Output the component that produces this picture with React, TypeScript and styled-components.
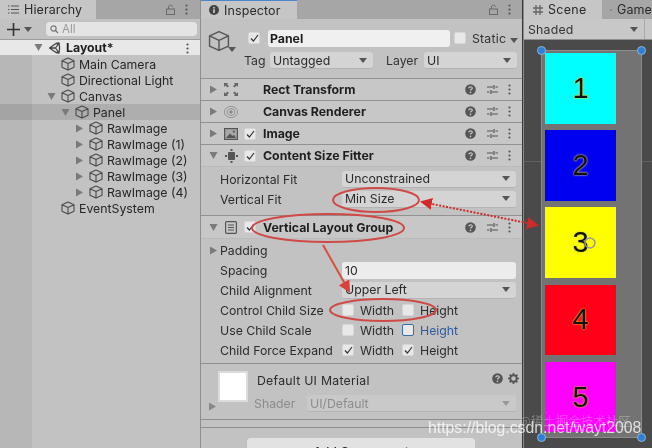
import React from 'react';
import styled, { createGlobalStyle } from 'styled-components';

const Global = createGlobalStyle`
  html, body { margin: 0; padding: 0; background: #c2c2c2; }
  #root { width: 652px; height: 448px; overflow: hidden; }
`;

const Page = styled.div`
  position: relative; width: 652px; height: 448px; overflow: hidden;
  display: flex; background: #282828;
  font-family: Inter, "Noto Sans", sans-serif; font-size: 12.3px; color: #1e1e1e;
  filter: blur(0.45px);
`;
const HierarchyPanel = styled.section`
  width: 200px; flex: none; display: flex; flex-direction: column; background: #c2c2c2; border-right: 1px solid #8e8e8e;
`;
const InspectorPanel = styled.section`
  width: 321px; flex: none; display: flex; flex-direction: column; background: #c2c2c2; border-right: 1px solid #3a3a3a;
`;
const ScenePanel = styled.section`
  flex: 1; min-width: 0; display: flex; flex-direction: column; background: #4a4a4a; border-left: 1px solid #8a8a8a;
`;
const TabBar = styled.div`
  height: 19px; flex: none; display: flex; align-items: stretch; background: #a6a6a6; position: relative;
`;
const Tab = styled.div<{ $w: number; $on?: boolean; $accent?: boolean }>`
  width: ${p => p.$w}px; display: flex; align-items: center; gap: 5px; padding-left: 8px; box-sizing: border-box;
  background: ${p => (p.$on ? '#c6c6c6' : 'transparent')}; font-size: 12.5px; letter-spacing: .1px; color: #2a2a2a;
  white-space: nowrap; overflow: hidden;
  border-top: ${p => (p.$accent ? '1px solid #4a86c8' : 'none')};
`;
const TabTools = styled.div<{ $right: number }>`
  margin-left: auto; display: flex; align-items: center; gap: 10px; padding-right: ${p => p.$right}px;
`;
const HierTools = styled.div`
  height: 20px; flex: none; display: flex; align-items: center; padding-left: 7px; border-bottom: 1px solid #9c9c9c;
`;
const PlusSlot = styled.span`
  width: 17px; flex: none; display: flex;
`;
const Search = styled.div`
  margin-left: 14px; width: 151px; height: 14px; background: #e4e4e4; border-radius: 4px; display: flex; align-items: center; gap: 3px;
  padding-left: 4px; box-sizing: border-box; font-size: 11.5px; color: #9a9a9a;
`;
const Tree = styled.div`
  flex: 1; padding-top: 1px; background: linear-gradient(to right, #b7b7b7 32px, #c2c2c2 32px);
`;
const SceneRow = styled.div`
  height: 15px; background: #e8e8e8; display: flex; align-items: center; padding-left: 34px; font-weight: 700; position: relative;
`;
const TreeRow = styled.div<{ $depth: number; $sel?: boolean }>`
  height: 16px; display: flex; align-items: center; padding-left: ${p => 47 + p.$depth * 14}px;
  background: ${p => (p.$sel ? 'rgba(0,0,0,.1)' : 'transparent')}; color: #262626;
`;
const ArrowSlot = styled.span`
  width: 14px; flex: none; display: flex; align-items: center;
`;
const Label = styled.span`
  margin-left: 4px; white-space: nowrap;
`;
const NameRow = styled.div`
  height: 26px; margin-top: 6px; display: flex; align-items: center; position: relative;
`;
const BigCube = styled.div`
  width: 47px; flex: none; padding-left: 7px; box-sizing: border-box; padding-top: 8px; position: relative;
`;
const CubeCaret = styled.span`
  position: absolute; left: 27px; top: 25px; display: flex;
`;
const Check = styled.span<{ $focus?: boolean }>`
  width: 12px; height: 12px; flex: none; background: #e8e8e8; border-radius: 2px; display: inline-flex; align-items: center; justify-content: center;
  box-sizing: border-box;
  border: ${p => (p.$focus ? '1px solid #3a6ea8' : '1px solid #d6d6d6')};
`;
const NameInput = styled.div`
  margin-left: 8px; width: 182px; height: 17px; background: #f0f0f0; border-radius: 3px; font-weight: 700; padding-left: 2px; box-sizing: border-box;
  display: flex; align-items: center;
`;
const StaticLabel = styled.span`
  margin-left: 6px; letter-spacing: .2px; color: #333;
`;
const TagRow = styled.div`
  height: 18px; margin-top: 1px; display: flex; align-items: center; padding-left: 43px; color: #333;
`;
const Select = styled.div<{ $w: number; $off?: boolean }>`
  width: ${p => p.$w}px; height: 17px; flex: none; background: ${p => (p.$off ? '#c9c9c9' : '#d4d4d4')}; border-radius: 3px; display: flex; align-items: center;
  justify-content: space-between; padding: 0 6px 0 3px; box-sizing: border-box;
  color: ${p => (p.$off ? '#8c8c8c' : '#2a2a2a')}; border-bottom: 1px solid #b4b4b4;
`;
const TagLabel = styled.span<{ $w: number; $pad?: number }>`
  width: ${p => p.$w}px; padding-left: ${p => p.$pad ?? 0}px; box-sizing: border-box; flex: none;
`;
const CompHeader = styled.div<{ $top?: number; $h?: number }>`
  height: ${p => p.$h ?? 21}px; margin-top: ${p => p.$top ?? 0}px; flex: none; display: flex; align-items: center; background: #c7c7c7; border-top: 1px solid #929292;
  padding-left: 8px; font-weight: 700; position: relative; color: #1f1f1f;
`;
const HeadIcon = styled.span`
  width: 14px; height: 14px; margin-left: 6px; flex: none; display: flex; align-items: center; justify-content: center;
`;
const HeadCheck = styled.span`
  width: 19px; flex: none; margin-left: 6px; display: flex;
`;
const HeadName = styled.span<{ $noCheck?: boolean }>`
  margin-left: ${p => (p.$noCheck ? 25 : 0)}px; white-space: nowrap;
`;
const HeadTools = styled.div`
  margin-left: auto; width: 57px; padding-right: 11px; box-sizing: border-box; display: flex; align-items: center; justify-content: space-between;
`;
const CompBody = styled.div<{ $h: number; $pad: number }>`
  height: ${p => p.$h}px; flex: none; border-top: 1px solid #bbb; box-sizing: border-box; padding-top: ${p => p.$pad}px; display: flex; flex-direction: column;
`;
const PropRow = styled.div<{ $h?: number }>`
  height: ${p => p.$h ?? 20}px; flex: none; display: flex; align-items: center; padding-left: 19px; position: relative; color: #2c2c2c;
`;
const PropArrow = styled.span`
  position: absolute; left: 8px; top: 3px;
`;
const PropName = styled.span`
  width: 122px; flex: none; white-space: nowrap;
`;
const TextValue = styled.div`
  width: 174px; height: 17px; background: #ececec; border-radius: 3px; padding-left: 3px; box-sizing: border-box; display: flex; align-items: center;
`;
const Toggle = styled.span<{ $w: number; $blue?: boolean }>`
  width: ${p => p.$w}px; flex: none; display: flex; align-items: center; gap: 6px; color: ${p => (p.$blue ? '#2b5c9e' : '#2c2c2c')};
`;
const Material = styled.div`
  height: 57px; box-sizing: border-box; flex: none; border-top: 1px solid #8f8f8f; border-bottom: 1px solid #8f8f8f; position: relative; display: flex;
`;
const Swatch = styled.div`
  width: 26px; height: 27px; margin: 7px 0 0 17px; background: #fff; border: 2px solid #dcdcdc; flex: none;
`;
const MatText = styled.div`
  margin-left: 9px; padding-top: 9px; flex: 1; min-width: 0; display: flex; flex-direction: column; gap: 7px; color: #2c2c2c;
`;
const MatTitle = styled.div`
  height: 15px; display: flex; align-items: center; justify-content: space-between; padding-right: 3px; letter-spacing: .25px;
`;
const MatIcons = styled.span`
  display: flex; gap: 5px; margin-top: -4px;
`;
const ShaderRow = styled.div`
  display: flex; align-items: center; margin-left: -3px; color: #8c8c8c;
`;
const ShaderName = styled.span`
  width: 53px; flex: none;
`;
const MatArrow = styled.span`
  position: absolute; left: 7px; bottom: 5px;
`;
const ThinRule = styled.div`
  height: 7px; flex: none; border-bottom: 1px solid #8f8f8f;
`;
const AddButton = styled.div`
  width: 228px; height: 22px; margin: 10px 0 0 46px; flex: none; background: #e2e2e2; border-radius: 4px; display: flex; justify-content: center; padding-top: 7px;
  box-sizing: border-box; font-weight: 500; line-height: 14px;
`;
const SceneTools = styled.div`
  height: 20px; flex: none; background: #c8c8c8; display: flex; align-items: center; padding-left: 4px; border-bottom: 1px solid #8e8e8e; letter-spacing: .2px; color: #333;
`;
const ShadedDrop = styled.div`
  width: 117px; height: 100%; display: flex; justify-content: space-between; align-items: center; padding-right: 6px; box-sizing: border-box; border-right: 1px solid #aaa;
`;
const Viewport = styled.div`
  flex: 1; position: relative; padding: 10px 0 0 17px; background: #4a4a4a;
`;
const GuideLine = styled.div`
  position: absolute; left: 0; right: 0; top: 121px; height: 1px; background: rgba(255,255,255,.12);
`;
const RectBox = styled.div`
  position: relative; width: 101px; height: 388px; box-sizing: border-box; border: 1px solid #8b8b8b; background: #737373;
  padding: 2px 0 0 3px; display: flex; flex-direction: column; gap: 6.7px;
`;
const Swatches = styled.div<{ $c: string; $stroke: string }>`
  width: 71px; height: 70.5px; flex: none; background: ${p => p.$c}; display: flex; align-items: center; justify-content: center;
  font-family: "Liberation Sans", Arial, sans-serif; font-size: 29px; color: #111;
  text-shadow: 0 0 1px ${p => p.$stroke}, 0 0 2px ${p => p.$stroke}, 0 0 2px ${p => p.$stroke};
`;
const Handle = styled.span<{ $x: 'left' | 'right'; $y: 'top' | 'bottom' }>`
  position: absolute; width: 9px; height: 9px; border-radius: 50%; background: #2f7fd6; border: 1px solid #8fb4dc; box-sizing: border-box;
  ${p => p.$x}: -5px; ${p => p.$y}: -5px;
`;
const Overlay = styled.svg`
  position: absolute; left: 0; top: 0; pointer-events: none;
`;
const Watermark = styled.div`
  position: absolute; left: 428px; top: 418px; font-family: "Liberation Sans", Arial, sans-serif; font-size: 15.8px; color: rgba(255,255,255,.78);
  white-space: nowrap; line-height: 20px;
`;
const WatermarkCjk = styled.div`
  position: absolute; left: 519px; top: 413px; font-family: "Noto Sans CJK SC", sans-serif; font-size: 12.5px; line-height: 16px; color: rgba(255,255,255,.28);
  white-space: nowrap;
`;

const Tri = ({ d = 'r', c = '#7a7a7a' }: { d?: 'r' | 'd'; c?: string }) => (
  <svg width="9" height="9" viewBox="0 0 9 9">
    <path d={d === 'r' ? 'M1 0.5 L8 4.5 L1 8.5Z' : 'M0.5 1 L8.5 1 L4.5 8Z'} fill={c} />
  </svg>
);
const Caret = ({ c = '#555' }: { c?: string }) => (
  <svg width="8" height="5" viewBox="0 0 8 5"><path d="M0 0H8L4 5Z" fill={c} /></svg>
);
const Cube = ({ s = 14, c = '#4a4a4a', w = 1.1 }: { s?: number; c?: string; w?: number }) => (
  <svg width={s} height={s} viewBox="0 0 14 14" fill="none" stroke={c} strokeWidth={w} strokeLinejoin="round" style={{ flex: 'none' }}>
    <path d="M7 1 L13 3.8 V10.2 L7 13 L1 10.2 V3.8Z M1 3.8 L7 6.6 L13 3.8 M7 6.6 V13" />
  </svg>
);
const Tick = () => (
  <svg width="9" height="8" viewBox="0 0 9 8" fill="none" stroke="#333" strokeWidth="1.2"><path d="M1 4.5 L3.4 7 L8 1" /></svg>
);
const Help = () => (
  <svg width="11" height="11" viewBox="0 0 11 11">
    <circle cx="5.5" cy="5.5" r="5.3" fill="#555" />
    <path d="M3.8 4.2 C3.8 2.3 7.3 2.3 7.3 4.2 C7.3 5.4 5.5 5.3 5.5 6.6" fill="none" stroke="#ccc" strokeWidth="1.2" />
    <circle cx="5.5" cy="8.4" r=".8" fill="#ccc" />
  </svg>
);
const Sliders = () => (
  <svg width="11" height="11" viewBox="0 0 11 11" stroke="#555" strokeWidth="1.2">
    <path d="M0 3H6M8.5 3H11M0 8H2.5M5 8H11" />
    <path d="M7 1V5M4 6V10" />
  </svg>
);
const Dots = () => (
  <svg width="3" height="11" viewBox="0 0 3 11" fill="#555">
    <circle cx="1.5" cy="1.5" r="1.1" /><circle cx="1.5" cy="5.5" r="1.1" /><circle cx="1.5" cy="9.5" r="1.1" />
  </svg>
);
const Gear = () => (
  <svg width="11" height="11" viewBox="0 0 11 11">
    <circle cx="5.5" cy="5.5" r="3.3" fill="none" stroke="#555" strokeWidth="2" />
    <path d="M5.5 0V2M5.5 9V11M0 5.5H2M9 5.5H11M1.6 1.6L3 3M8 8L9.4 9.4M1.6 9.4L3 8M8 3L9.4 1.6" stroke="#555" strokeWidth="1.6" />
  </svg>
);
const Lock = () => (
  <svg width="9" height="11" viewBox="0 0 9 11" fill="none" stroke="#6a6a6a" strokeWidth="1">
    <rect x=".5" y="5" width="8" height="5.5" /><path d="M2.5 5V3C2.5 .6 6.5 .6 6.5 3" />
  </svg>
);
const ListIcon = () => (
  <svg width="11" height="9" viewBox="0 0 11 9" stroke="#555" strokeWidth="1">
    <path d="M0 1H1.5M3 1H11M0 4.5H1.5M3 4.5H11M0 8H1.5M3 8H11" />
  </svg>
);
const PlusIcon = () => (
  <svg width="13" height="13" viewBox="0 0 13 13" stroke="#333" strokeWidth="1.6"><path d="M6.5 0V13M0 6.5H13" /></svg>
);
const UnityLogo = () => (
  <svg width="13" height="12" viewBox="0 0 12 12" fill="none" stroke="#444" strokeWidth="1.3" strokeLinejoin="round">
    <path d="M1 6 L7.5 1.5 L10.5 1 L11 5 L11 7 L10.5 11 L7.5 10.5Z M1 6H7 L10.5 1 M7 6 L10.5 11" />
  </svg>
);
const RectIcon = () => (
  <svg width="14" height="13" viewBox="0 0 14 13" fill="#666">
    <path d="M0 0H4L3 1.2L5 3L3.4 4.4L1.5 2.5L0 4Z" />
    <path d="M14 0H10L11 1.2L9 3L10.6 4.4L12.5 2.5L14 4Z" />
    <path d="M0 13H4L3 11.8L5 10L3.4 8.6L1.5 10.5L0 9Z" />
    <path d="M14 13H10L11 11.8L9 10L10.6 8.6L12.5 10.5L14 9Z" />
  </svg>
);
const RendererIcon = () => (
  <svg width="16" height="14" viewBox="0 0 16 14" fill="none" stroke="#8e8e8e" strokeWidth="1">
    <ellipse cx="8" cy="7" rx="7.5" ry="6.5" /><ellipse cx="8" cy="7" rx="4.5" ry="4" /><circle cx="8" cy="7" r="1.6" fill="#8e8e8e" />
  </svg>
);
const ImageIcon = () => (
  <svg width="14" height="12" viewBox="0 0 14 12">
    <rect x=".6" y=".6" width="12.8" height="10.8" fill="#a8a8a8" stroke="#555" strokeWidth="1.2" />
    <path d="M2 10 L6 5.5 L8.5 8 L10 6.8 L12 10Z" fill="#555" /><circle cx="9.8" cy="3.6" r="1.1" fill="#555" />
  </svg>
);
const FitterIcon = () => (
  <svg width="13" height="14" viewBox="0 0 13 14" fill="#555">
    <rect x="3" y="3" width="7" height="8" rx="1" /><rect x="5.5" y="0" width="2" height="2" /><rect x="5.5" y="12" width="2" height="2" />
    <rect x="0" y="6" width="2" height="2" /><rect x="11" y="6" width="2" height="2" />
  </svg>
);
const GroupIcon = () => (
  <svg width="12" height="13" viewBox="0 0 12 13" fill="none" stroke="#555" strokeWidth="1.2">
    <rect x=".6" y=".6" width="10.8" height="11.8" rx="1" /><path d="M3 4H9M3 6.5H9M3 9H9" />
  </svg>
);
const GridIcon = () => (
  <svg width="10" height="10" viewBox="0 0 10 10" stroke="#666" strokeWidth="1.3"><path d="M3 0V10M7 0V10M0 3H10M0 7H10" /></svg>
);
const GameIcon = () => (
  <svg width="14" height="8" viewBox="0 0 14 8"><rect width="14" height="8" rx="4" fill="#666" /><circle cx="4" cy="4" r="1.6" fill="#aaa" /><circle cx="10" cy="4" r="1.6" fill="#aaa" /></svg>
);
const InfoIcon = () => (
  <svg width="10" height="10" viewBox="0 0 10 10"><circle cx="5" cy="5" r="5" fill="#444" /><rect x="4.2" y="4.2" width="1.6" height="3.8" fill="#ccc" /><rect x="4.2" y="2" width="1.6" height="1.5" fill="#ccc" /></svg>
);

const Tools = () => (
  <HeadTools><Help /><Sliders /><Dots /></HeadTools>
);

const tree: { n: string; d: number; a?: 'r' | 'd'; sel?: boolean }[] = [
  { n: 'Main Camera', d: 0 },
  { n: 'Directional Light', d: 0 },
  { n: 'Canvas', d: 0, a: 'd' },
  { n: 'Panel', d: 1, a: 'd', sel: true },
  { n: 'RawImage', d: 2, a: 'r' },
  { n: 'RawImage (1)', d: 2, a: 'r' },
  { n: 'RawImage (2)', d: 2, a: 'r' },
  { n: 'RawImage (3)', d: 2, a: 'r' },
  { n: 'RawImage (4)', d: 2, a: 'r' },
  { n: 'EventSystem', d: 0 },
];
const squares = [
  { c: '#00ffff', s: '#c8e040', n: 1 },
  { c: '#0000f0', s: '#b0a080', n: 2 },
  { c: '#ffff00', s: '#d8d840', n: 3 },
  { c: '#ff0018', s: '#f09020', n: 4 },
  { c: '#ff00ff', s: '#f09040', n: 5 },
];

export default function App() {
  return (
    <Page>
      <Global />
      <HierarchyPanel>
        <TabBar>
          <Tab $w={96} $on><ListIcon />Hierarchy</Tab>
          <TabTools $right={12}><Lock /><Dots /></TabTools>
        </TabBar>
        <HierTools>
          <PlusSlot><PlusIcon /></PlusSlot>
          <Caret />
          <Search>
            <svg width="9" height="9" viewBox="0 0 9 9" fill="none" stroke="#777" strokeWidth="1.2"><circle cx="3.5" cy="3.5" r="2.6" /><path d="M5.5 5.5L8 8" /></svg>
            All
          </Search>
        </HierTools>
        <SceneRow>
          <ArrowSlot><Tri d="d" /></ArrowSlot>
          <UnityLogo />
          <Label style={{ marginLeft: 5 }}>Layout*</Label>
          <span style={{ position: 'absolute', right: 11, top: 2 }}><Dots /></span>
        </SceneRow>
        <Tree>
          {tree.map(t => (
            <TreeRow key={t.n} $depth={t.d} $sel={t.sel}>
              <ArrowSlot>{t.a && <Tri d={t.a} />}</ArrowSlot>
              <Cube />
              <Label>{t.n}</Label>
            </TreeRow>
          ))}
        </Tree>
      </HierarchyPanel>

      <InspectorPanel>
        <TabBar>
          <Tab $w={96} $on $accent><InfoIcon />Inspector</Tab>
          <TabTools $right={11}><Lock /><Dots /></TabTools>
        </TabBar>
        <NameRow>
          <BigCube>
            <Cube s={22} c="#555" w={.9} />
            <CubeCaret><Caret /></CubeCaret>
          </BigCube>
          <Check><Tick /></Check>
          <NameInput>Panel</NameInput>
          <Check style={{ marginLeft: 4 }} />
          <StaticLabel>Static</StaticLabel>
          <span style={{ marginLeft: 4 }}><Caret /></span>
        </NameRow>
        <TagRow>
          <TagLabel $w={26}>Tag</TagLabel>
          <Select $w={103}>Untagged<Caret /></Select>
          <TagLabel $w={51} $pad={13}>Layer</TagLabel>
          <Select $w={93}>UI<Caret /></Select>
        </TagRow>
        <CompHeader $top={9}>
          <Tri /><HeadIcon><RectIcon /></HeadIcon>
          <HeadName $noCheck>Rect Transform</HeadName><Tools />
        </CompHeader>
        <CompHeader>
          <Tri /><HeadIcon><RendererIcon /></HeadIcon>
          <HeadName $noCheck>Canvas Renderer</HeadName><Tools />
        </CompHeader>
        <CompHeader>
          <Tri /><HeadIcon><ImageIcon /></HeadIcon>
          <HeadCheck><Check><Tick /></Check></HeadCheck>
          <HeadName>Image</HeadName><Tools />
        </CompHeader>
        <CompHeader>
          <Tri d="d" /><HeadIcon><FitterIcon /></HeadIcon>
          <HeadCheck><Check><Tick /></Check></HeadCheck>
          <HeadName>Content Size Fitter</HeadName><Tools />
        </CompHeader>
        <CompBody $h={49} $pad={2}>
          <PropRow><PropName>Horizontal Fit</PropName><Select $w={174}>Unconstrained<Caret /></Select></PropRow>
          <PropRow><PropName>Vertical Fit</PropName><Select $w={174}>Min Size<Caret /></Select></PropRow>
        </CompBody>
        <CompHeader $h={22}>
          <Tri d="d" /><HeadIcon><GroupIcon /></HeadIcon>
          <HeadCheck><Check><Tick /></Check></HeadCheck>
          <HeadName>Vertical Layout Group</HeadName><Tools />
        </CompHeader>
        <CompBody $h={125} $pad={1}>
          <PropRow><PropArrow><Tri /></PropArrow><PropName>Padding</PropName></PropRow>
          <PropRow><PropName>Spacing</PropName><TextValue>10</TextValue></PropRow>
          <PropRow><PropName>Child Alignment</PropName><Select $w={174}>Upper Left<Caret /></Select></PropRow>
          <PropRow>
            <PropName>Control Child Size</PropName>
            <Toggle $w={60}><Check />Width</Toggle><Toggle $w={80}><Check />Height</Toggle>
          </PropRow>
          <PropRow>
            <PropName>Use Child Scale</PropName>
            <Toggle $w={60}><Check />Width</Toggle><Toggle $w={80} $blue><Check $focus />Height</Toggle>
          </PropRow>
          <PropRow>
            <PropName>Child Force Expand</PropName>
            <Toggle $w={60}><Check><Tick /></Check>Width</Toggle><Toggle $w={80}><Check><Tick /></Check>Height</Toggle>
          </PropRow>
        </CompBody>
        <Material>
          <Swatch />
          <MatText>
            <MatTitle>Default UI Material<MatIcons><Help /><Gear /></MatIcons></MatTitle>
            <ShaderRow><ShaderName>Shader</ShaderName><Select $w={209} $off>UI/Default<Caret c="#999" /></Select></ShaderRow>
          </MatText>
          <MatArrow><Tri c="#888" /></MatArrow>
        </Material>
        <ThinRule />
        <AddButton>Add Component</AddButton>
      </InspectorPanel>

      <ScenePanel>
        <TabBar>
          <Tab $w={78} $on style={{ paddingLeft: 9, letterSpacing: '.3px' }}><GridIcon />Scene</Tab>
          <Tab $w={50} style={{ paddingLeft: 8 }}><GameIcon />Game</Tab>
        </TabBar>
        <SceneTools><ShadedDrop>Shaded<Caret /></ShadedDrop></SceneTools>
        <Viewport>
          <GuideLine />
          <RectBox>
            <Handle $x="left" $y="top" /><Handle $x="right" $y="top" />
            <Handle $x="left" $y="bottom" /><Handle $x="right" $y="bottom" />
            {squares.map(s => <Swatches key={s.n} $c={s.c} $stroke={s.s}>{s.n}</Swatches>)}
          </RectBox>
        </Viewport>
      </ScenePanel>

      <Overlay width="652" height="448" viewBox="0 0 652 448" fill="none">
        <defs>
          <marker id="solid" markerWidth="7" markerHeight="7" refX="5" refY="3" orient="auto"><path d="M0 0L6 3L0 6Z" fill="#d8403a" /></marker>
          <marker id="dot" markerWidth="8" markerHeight="8" refX="5" refY="3" orient="auto-start-reverse"><path d="M0 0L6 3L0 6Z" fill="#d02a2a" /></marker>
        </defs>
        <g stroke="#cf4a46" strokeWidth="2">
          <ellipse cx="376" cy="200" rx="43" ry="12" />
          <ellipse cx="328" cy="228" rx="76" ry="14" />
          <ellipse cx="383" cy="310" rx="53" ry="11" />
          <path d="M323 245L349 291" stroke="#d8503c" markerEnd="url(#solid)" />
          <path d="M422 202L537 225" stroke="#d02a2a" strokeDasharray="2 1.5" markerStart="url(#dot)" markerEnd="url(#dot)" />
        </g>
        <path d="M590 238a5 5 0 1 1 0 10a5 5 0 1 1 0-10" stroke="#999" strokeWidth="1.5" />
      </Overlay>
      <WatermarkCjk>@稀土掘金技术社区</WatermarkCjk>
      <Watermark>https://blog.csdn.net/wayt2008</Watermark>
    </Page>
  );
}
